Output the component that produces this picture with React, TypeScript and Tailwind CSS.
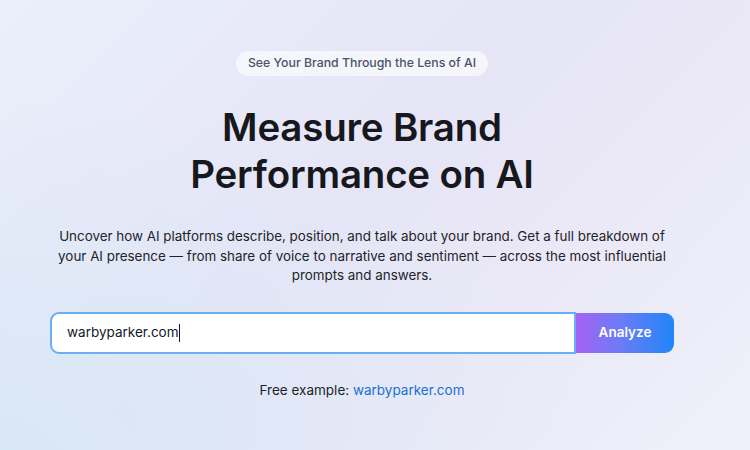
import React from 'react'

export default function App() {
  return (
    <div
      className="w-[750px] h-[450px] overflow-hidden bg-[linear-gradient(135deg,#eaeffb_0%,#e6e5f6_45%,#ebe9f7_70%,#eef1fa_100%)] relative"
      style={{ fontFamily: 'Inter, "Noto Sans", sans-serif' }}
    >
      <div className="absolute inset-0 bg-[radial-gradient(ellipse_at_0%_100%,#d9e8f6_0%,rgba(217,232,246,0)_55%)]" />
      <div className="relative flex flex-col items-center pt-[51px] pr-[26px]">
        {/* Eyebrow pill */}
        <div className="rounded-full bg-white/60 px-3 h-[25px] flex items-center text-[12.3px] font-medium text-[#4b5563]">
          See Your Brand Through the Lens of AI
        </div>

        {/* Heading */}
        <h1 className="mt-[28px] text-center text-[38.5px] leading-[47px] font-semibold tracking-[-0.2px] text-[#16181d]">
          Measure Brand
          <br />
          Performance on AI
        </h1>

        {/* Description */}
        <p className="mt-[29px] w-[616px] text-center text-[13.4px] leading-[19.5px] text-[#1f2328]">
          Uncover how AI platforms describe, position, and talk about your brand. Get a full breakdown of your AI presence — from share of voice to narrative and sentiment — across the most influential prompts and answers.
        </p>

        {/* Search */}
        <div className="mt-[26px] flex items-center w-[624px]">
          <div className="flex-1 h-[42px] bg-white border-2 border-[#6aaef5] rounded-l-[9px] flex items-center px-[15px] text-[13.5px] text-[#111827]">
            warbyparker.com
            <span className="w-px h-[18px] bg-[#111827]" />
          </div>
          <button className="w-[98px] h-[40px] rounded-r-[9px] bg-[linear-gradient(90deg,#a463f2_0%,#6c7bf6_45%,#1f86f7_100%)] text-white text-[13.5px] font-semibold">
            Analyze
          </button>
        </div>

        {/* Example */}
        <div className="mt-[26px] text-[13.5px] text-[#1f2328]">
          Free example: <span className="text-[#1b6fd1]">warbyparker.com</span>
        </div>
      </div>
    </div>
  )
}
